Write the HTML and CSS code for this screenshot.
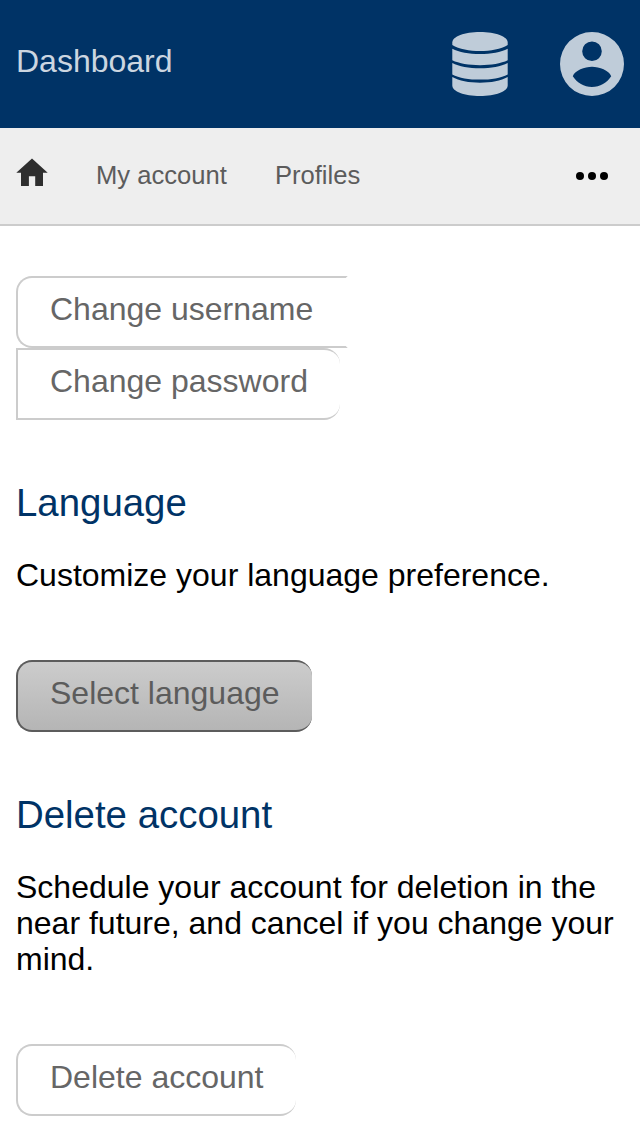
FILE: index.html
```html
<!DOCTYPE html>
<html lang="en">
<head>
<meta charset="utf-8">
<title>Dashboard</title>
<link rel="stylesheet" href="styles.css">
</head>
<body>
<header class="topbar">
  <span class="brand">Dashboard</span>
  <svg class="database" width="56" height="64" viewBox="0 0 56 64" aria-hidden="true">
    <path d="M.3 10.500C.3 4.500 12.500 0 28 0s27.700 4.500 27.700 10.500V13C49 17 38.500 19 28 19S7 17 .3 13z"/>
    <path d="M.3 16.700C7 20.300 17 22 28 22s21-1.700 27.700-5.300v11.600C49 31.500 39 33.200 28 33.200S7 31.500 .3 28.300z"/>
    <path d="M.3 31C7 34.600 17 36.300 28 36.300s21-1.700 27.700-5.300v11.400C49 45.900 39 47.600 28 47.600S7 45.900 .3 42.400z"/>
    <path d="M.3 45C7 48.800 17 50.700 28 50.700s21-1.900 27.700-5.700v8.500C55.700 59.500 43.500 64 28 64S.3 59.500 .3 53.500z"/>
  </svg>
  <svg class="person" width="64" height="64" viewBox="0 0 64 64" aria-hidden="true">
    <path fill-rule="evenodd" d="M32 0a32 32 0 1 1 0 64 32 32 0 0 1 0-64zm0 9.400a9.800 9.800 0 1 0 0 19.600 9.800 9.800 0 0 0 0-19.600zM12.800 44.200C17 50.800 24 55 32 55s15-4.200 19.200-10.800C49 38.500 39.500 34.800 32 34.800S15 38.500 12.800 44.200z"/>
  </svg>
</header>
<nav class="nav">
  <svg class="home" width="32" height="28" viewBox="0 0 32 28" aria-hidden="true">
    <path d="M16 .5L.3 14.700H5V28h7.900v-9.800h6.300V28H27V14.700h4.700z"/>
  </svg>
  <a class="nav-link">My account</a>
  <a class="nav-link">Profiles</a>
  <svg class="more" width="32" height="8" viewBox="0 0 32 8" aria-hidden="true">
    <circle cx="4" cy="4" r="4"/><circle cx="16" cy="4" r="4"/><circle cx="28" cy="4" r="4"/>
  </svg>
</nav>
<main class="content">
  <div class="actions">
    <a class="button button-first">Change username</a>
    <a class="button button-last">Change password</a>
  </div>
  <section class="section">
    <h2 class="heading">Language</h2>
    <p class="text">Customize your language preference.</p>
    <a class="button button-active">Select language</a>
  </section>
  <section class="section">
    <h2 class="heading">Delete account</h2>
    <p class="text">Schedule your account for deletion in the near future, and cancel if you change your mind.</p>
    <a class="button button-delete">Delete account</a>
  </section>
</main>
</body>
</html>
```
FILE: styles.css
```css
* { box-sizing: border-box; }

body {
  margin: 0;
  height: 1136px;
  overflow: hidden;
  background: #fff;
  color: #000;
  font: 32px/36px "Liberation Sans", Arial, sans-serif;
}

.topbar {
  display: flex;
  align-items: center;
  height: 128px;
  padding: 0 16px;
  background: #036;
}

.brand {
  margin: 0 auto 6px 0;
  color: #ccd6e0;
}

.database, .person { fill: #bfccd9; }
.database { margin-right: 52px; }

.nav {
  display: flex;
  align-items: center;
  height: 98px;
  padding: 0 32px 0 16px;
  background: #eee;
  border-bottom: 2px solid #ccc;
}

.home {
  margin: 0 48px 8px 0;
  fill: #2e2e2e;
}

.nav-link {
  margin: 0 48px 2px 0;
  font-size: 25.6px;
  line-height: 30px;
  color: #5c5c5c;
}

.more { margin-left: auto; }

.content { padding: 50px 16px 0; }

.actions {
  display: flex;
  flex-direction: column;
  align-items: flex-start;
}

.button {
  display: block;
  width: fit-content;
  height: 72px;
  padding: 13px 32px 19px;
  border: 2px solid #ccc;
  border-right: 0;
  border-radius: 16px;
  background: #fff;
  color: #666;
}

.button-first {
  padding-right: 33px;
  border-right: 2px solid #fff;
  border-radius: 16px 0 0 16px;
}

.button-last { border-radius: 0 16px 16px 0; }

.button-active {
  border-color: #5c5c5c;
  background: linear-gradient(#ccc, #b5b5b5);
  color: #5c5c5c;
}

.button-delete { padding-right: 33px; }

.section { padding-top: 60px; }

.heading {
  margin: 0 0 32px;
  font-size: 38.4px;
  line-height: 45px;
  font-weight: 400;
  color: #036;
}

.text { margin: 0 0 67px; }
```
